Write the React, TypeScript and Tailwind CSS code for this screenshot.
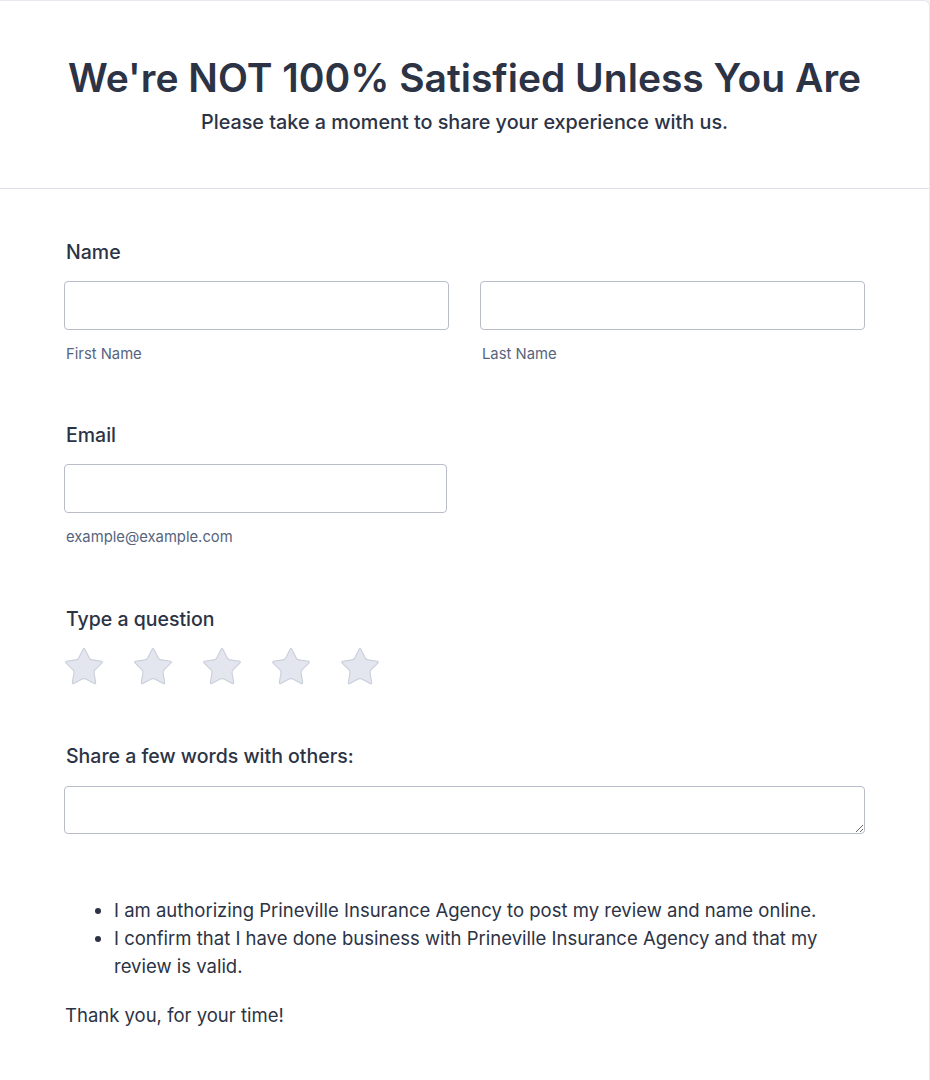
import { Star } from "lucide-react";

/* ── FIELD LABEL ── */
function Label({ children }: { children: React.ReactNode }) {
  return (
    <label className="block pl-[2px] text-[19.5px] leading-[24px] font-medium text-[#2c3345]">
      {children}
    </label>
  );
}

function Sub({ children }: { children: React.ReactNode }) {
  return <p className="mt-[14px] pl-[2px] text-[14.8px] leading-[20px] text-[#57647e]">{children}</p>;
}

const inputCls =
  "block w-full h-[49px] rounded-[4px] border border-[#b8bdc9] bg-white px-3 text-[16px] text-[#2c3345] outline-none";

export default function App() {
  return (
    <div
      className="min-h-screen bg-[#f3f3f7]"
      style={{ fontFamily: "Inter, 'Noto Sans', sans-serif" }}
    >
      <div className="w-[930px] min-h-[1080px] bg-white border-t border-r border-[#e6e8ee] rounded-tr-[6px] text-[#2c3345]">
        {/* ── HEADER ── */}
        <header className="pt-[54px] pb-[53px] text-center border-b border-[#dfe1ea]">
          <h1 className="text-[39px] leading-[46px] font-semibold">
            We're NOT 100% Satisfied Unless You Are
          </h1>
          <p className="mt-[8px] text-[19.8px] leading-[26px] font-medium">
            Please take a moment to share your experience with us.
          </p>
        </header>

        {/* ── FORM ── */}
        <form className="px-[64px] pt-[51px] pb-10">
          {/* Name */}
          <div>
            <Label>Name</Label>
            <div className="mt-[17px] grid grid-cols-2 gap-[31px]">
              <div>
                <input className={inputCls} />
                <Sub>First Name</Sub>
              </div>
              <div>
                <input className={inputCls} />
                <Sub>Last Name</Sub>
              </div>
            </div>
          </div>

          {/* Email */}
          <div className="mt-[59px]">
            <Label>Email</Label>
            <div className="mt-[17px] w-[383px]">
              <input className={inputCls} />
              <Sub>example@example.com</Sub>
            </div>
          </div>

          {/* Rating */}
          <div className="mt-[60px]">
            <Label>Type a question</Label>
            <div className="mt-[14px] ml-[-2px] flex gap-[25px]">
              {[0, 1, 2, 3, 4].map((i) => (
                <Star
                  key={i}
                  size={44}
                  strokeWidth={0.6}
                  className="fill-[#e3e6ef] text-[#c9cedb]"
                />
              ))}
            </div>
          </div>

          {/* Comment */}
          <div className="mt-[55px]">
            <Label>Share a few words with others:</Label>
            <textarea className="mt-[18px] block w-full h-[48px] rounded-[4px] border border-[#b8bdc9] px-3 py-2 outline-none" />
          </div>

          {/* Consent */}
          <ul className="mt-[62px] list-disc pl-[50px] text-[18.5px] leading-[28px] marker:text-[#2c3345]">
            <li>I am authorizing Prineville Insurance Agency to post my review and name online.</li>
            <li>
              I confirm that I have done business with Prineville Insurance Agency and that my review
              is valid.
            </li>
          </ul>
          <p className="mt-[21px] pl-[1px] text-[18.5px] leading-[28px]">Thank you, for your time!</p>
        </form>
      </div>
    </div>
  );
}
